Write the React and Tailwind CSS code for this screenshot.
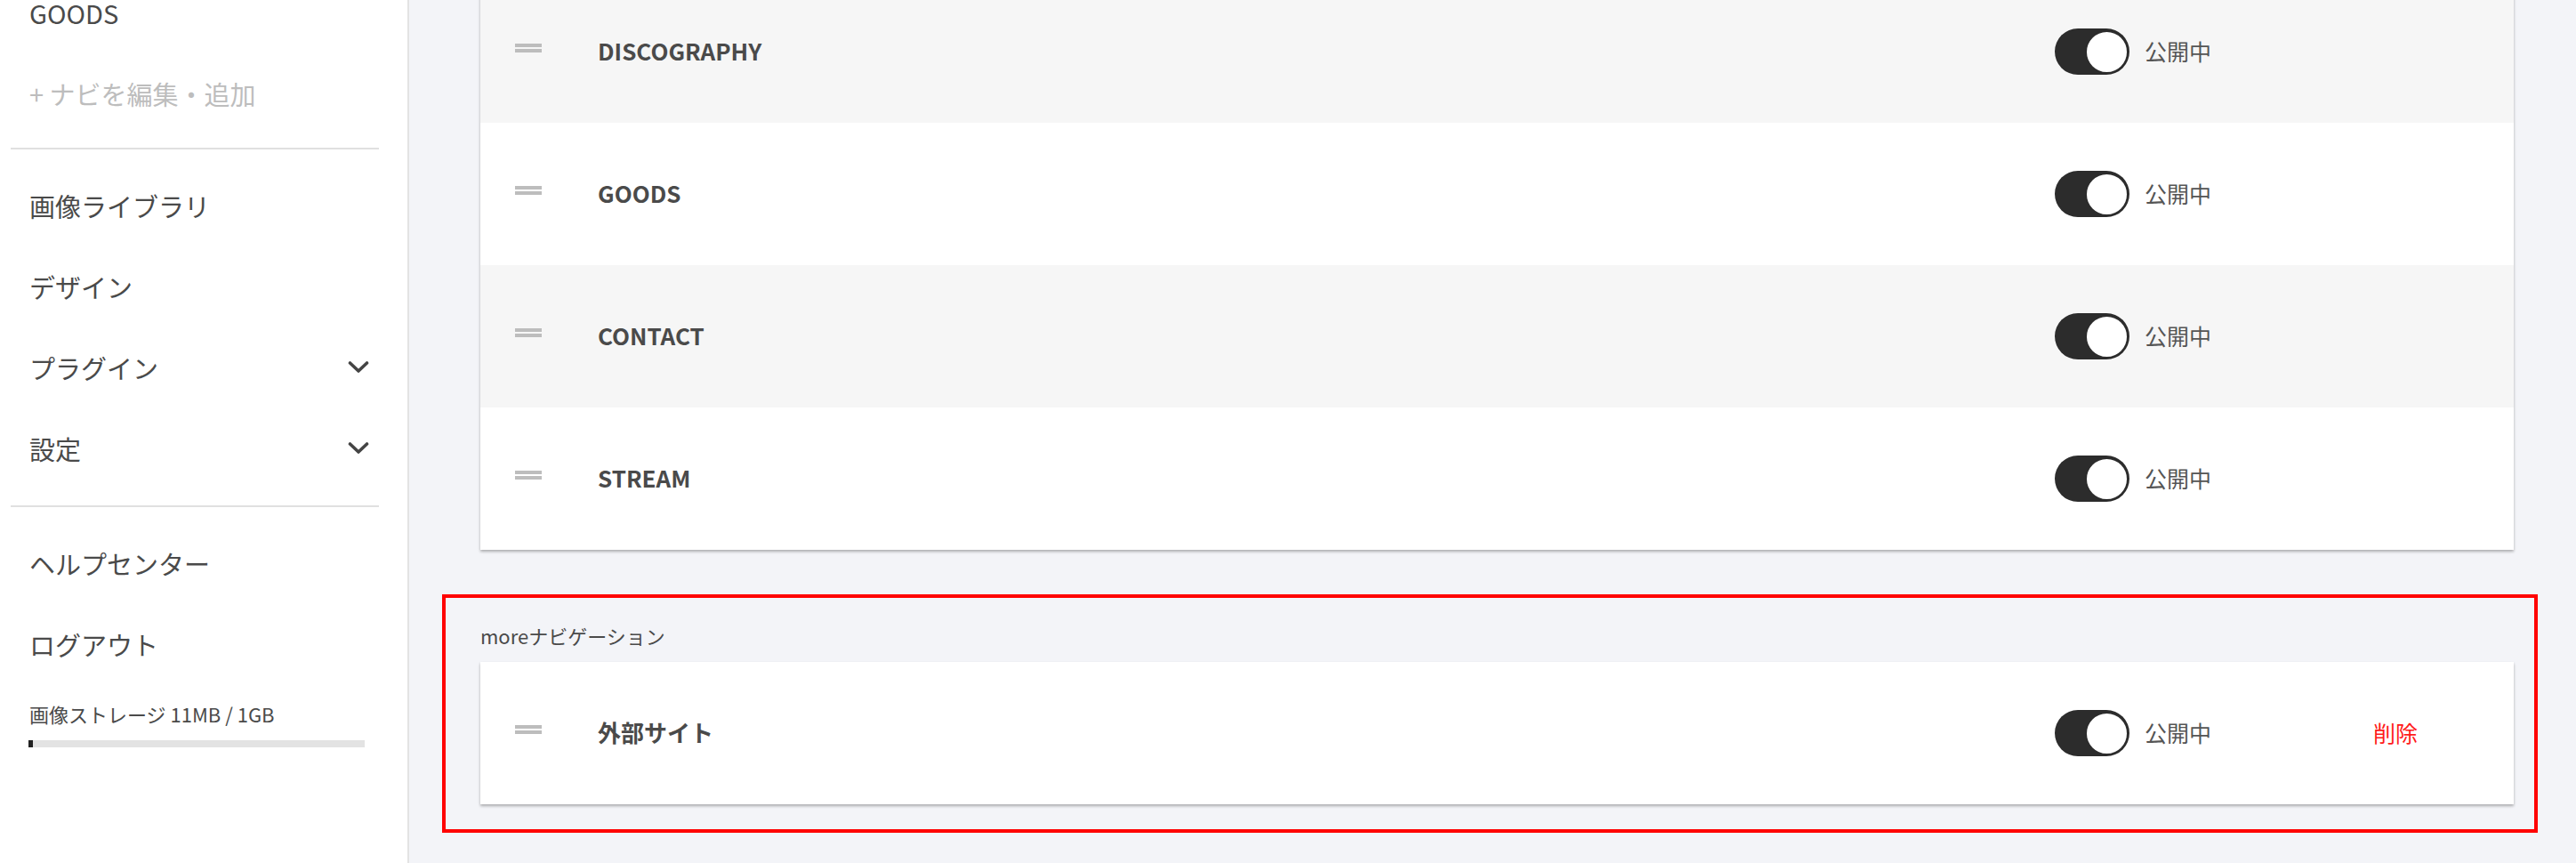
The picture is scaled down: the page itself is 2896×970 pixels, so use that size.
import React from 'react';

const rows = [
  { label: 'DISCOGRAPHY', bg: 'bg-[#f6f6f6]' },
  { label: 'GOODS', bg: 'bg-white' },
  { label: 'CONTACT', bg: 'bg-[#f6f6f6]' },
  { label: 'STREAM', bg: 'bg-white' },
];

function Chevron() {
  return (
    <svg width="24" height="16" viewBox="0 0 24 16" fill="none">
      <polyline points="2.5,3 12,12 21.5,3" stroke="#444" strokeWidth="3.6" strokeLinecap="round" strokeLinejoin="round" />
    </svg>
  );
}

function SideItem({ children, chevron, muted }) {
  return (
    <div className={`h-[91px] flex items-center justify-between pl-[33px] pr-[43px] text-[29px] leading-[40px] ${muted ? 'text-[#bdbdbd]' : 'text-[#4a4a4a]'}`}>
      <span>{children}</span>
      {chevron && <Chevron />}
    </div>
  );
}

function Handle() {
  return (
    <div className="w-[30px] flex flex-col gap-[2px] mb-[8px] shrink-0">
      <div className="h-[4px] bg-[#bdbdbd]" />
      <div className="h-[4px] bg-[#bdbdbd]" />
    </div>
  );
}

function Toggle() {
  return (
    <div className="w-[84px] h-[52px] rounded-full bg-[#2c2c2c] flex items-center justify-end pr-[1px] shrink-0">
      <div className="w-[49px] h-[49px] rounded-full bg-white border-2 border-[#2c2c2c]" />
    </div>
  );
}

function NavRow({ label, bg, removable }) {
  return (
    <div className={`h-[160px] flex items-center pl-[39px] ${bg}`}>
      <Handle />
      <div className="flex-1 pl-[63px] mb-[4px] text-[26px] font-bold text-[#4a4a4a]">{label}</div>
      <div className="w-[516px] flex items-center shrink-0">
        <Toggle />
        <span className="ml-[17px] w-[257px] text-[25px] text-[#555]">公開中</span>
        {removable && <span className="text-[25px] text-[#ff1a1a]">削除</span>}
      </div>
    </div>
  );
}

export default function App() {
  return (
    <div className="flex w-full h-[970px] overflow-hidden font-['Noto_Sans_CJK_JP',sans-serif] bg-[#f3f4f8]">
      <aside className="w-[460px] shrink-0 bg-white border-r-2 border-[#e3e3e3]">
        <div className="-mt-[32px]">
          <SideItem>GOODS</SideItem>
          <SideItem muted>+ ナビを編集・追加</SideItem>
          <div className="mt-[16px] mb-[17px] ml-[12px] w-[414px] h-[2px] bg-[#e0e0e0]" />
          <SideItem>画像ライブラリ</SideItem>
          <SideItem>デザイン</SideItem>
          <SideItem chevron>プラグイン</SideItem>
          <SideItem chevron>設定</SideItem>
          <div className="mt-[19px] mb-[17px] ml-[12px] w-[414px] h-[2px] bg-[#e0e0e0]" />
          <SideItem>ヘルプセンター</SideItem>
          <SideItem>ログアウト</SideItem>
          <div className="mt-[17px] pl-[33px] text-[22px] leading-[32px] text-[#4a4a4a]">画像ストレージ 11MB / 1GB</div>
          <div className="mt-[14px] ml-[32px] w-[378px] h-[8px] bg-[#e3e3e3]">
            <div className="w-[5px] h-full bg-[#222]" />
          </div>
        </div>
      </aside>

      <main className="flex-1 pl-[37px] pr-[43px]">
        <div className="-mt-[22px] ml-[43px] mr-[27px] shadow-[0_2px_3px_rgba(0,0,0,0.3)]">
          {rows.map((r) => (
            <NavRow key={r.label} label={r.label} bg={r.bg} />
          ))}
        </div>

        <section className="mt-[50px] border-4 border-[#ff0000] pl-[39px] pr-[23px] pt-[27px] pb-[28px]">
          <div className="text-[22px] leading-[30px] text-[#4a4a4a]">moreナビゲーション</div>
          <div className="mt-[15px] shadow-[0_2px_3px_rgba(0,0,0,0.3)]">
            <NavRow label="外部サイト" bg="bg-white" removable />
          </div>
        </section>
      </main>
    </div>
  );
}
